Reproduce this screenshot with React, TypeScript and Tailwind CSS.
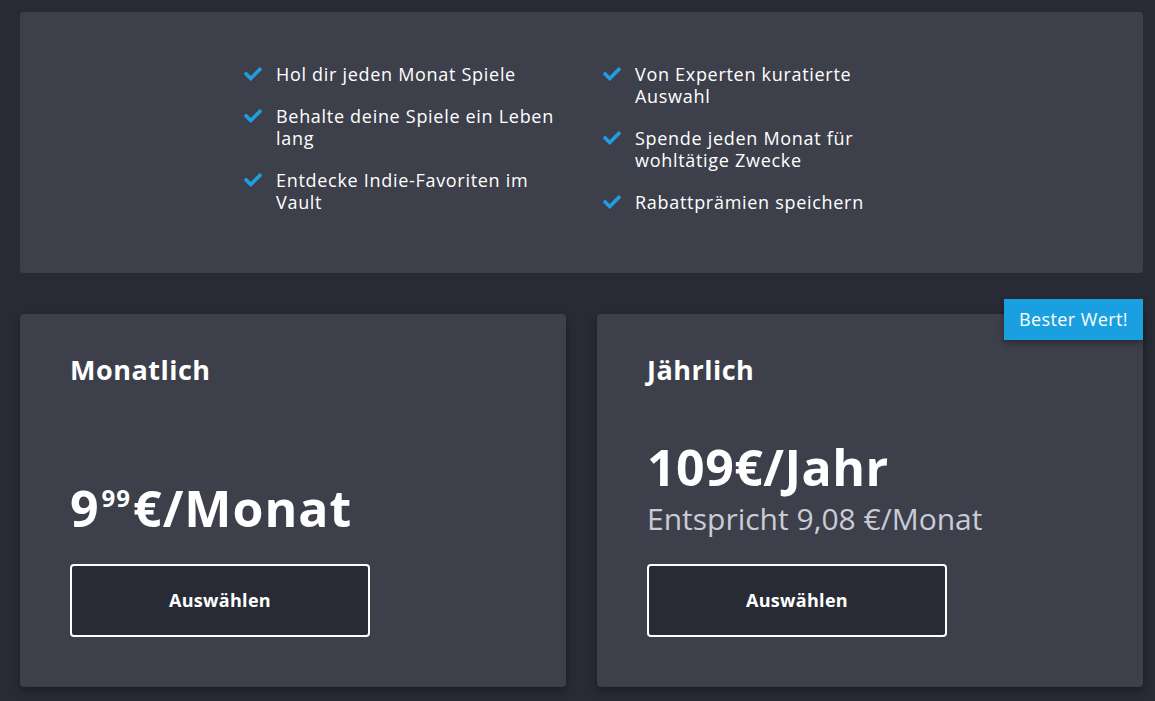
import { FaCheck } from "react-icons/fa";

const leftFeatures = [
  ["Hol dir jeden Monat Spiele"],
  ["Behalte deine Spiele ein Leben", "lang"],
  ["Entdecke Indie-Favoriten im", "Vault"],
];

const rightFeatures = [
  ["Von Experten kuratierte", "Auswahl"],
  ["Spende jeden Monat für", "wohltätige Zwecke"],
  ["Rabattprämien speichern"],
];

function FeatureList({ items }: { items: string[][] }) {
  return (
    <ul className="flex flex-col gap-[20px]">
      {items.map((lines) => (
        <li key={lines[0]} className="flex items-start">
          <FaCheck className="mt-[2px] mr-[14px] shrink-0 text-[#1f9ee2]" size={18} />
          <span className="text-[18px] leading-[22px] font-medium tracking-[0.7px] text-white">
            {lines.map((l) => (
              <span key={l} className="block whitespace-nowrap">
                {l}
              </span>
            ))}
          </span>
        </li>
      ))}
    </ul>
  );
}

function SelectButton() {
  return (
    <button className="w-[300px] h-[73px] rounded-[4px] border-2 border-white bg-[#282b35] text-white text-[18px] tracking-[0.3px] font-bold">
      Auswählen
    </button>
  );
}

export default function App() {
  return (
    <div
      className="w-[1155px] h-[701px] overflow-hidden bg-[#282b35] pl-[20px] pr-[12px] pt-[12px]"
      style={{ fontFamily: "'Open Sans', 'Noto Sans', sans-serif" }}
    >
      <section className="h-[261px] rounded-[4px] bg-[#3d3f4b] pt-[51px] pl-[224px]">
        <div className="flex">
          <div className="w-[359px]">
            <FeatureList items={leftFeatures} />
          </div>
          <div className="w-[340px]">
            <FeatureList items={rightFeatures} />
          </div>
        </div>
      </section>

      <div className="mt-[41px] grid grid-cols-2 gap-[31px]">
        <div className="h-[373px] rounded-[4px] bg-[#3d3f4b] shadow-[0_4px_8px_rgba(0,0,0,0.35)] flex flex-col px-[50px] pt-[40px] pb-[50px]">
          <h2 className="text-[27px] leading-[32px] font-bold tracking-[0.5px] text-white">Monatlich</h2>
          <div className="flex-1" />
          <div className="text-[50px] leading-[56px] font-bold tracking-[1px] text-white">
            9<span className="text-[24px] leading-none align-top relative top-[6px] mx-[2px]">99</span>€/Monat
          </div>
          <div className="mt-[28px]">
            <SelectButton />
          </div>
        </div>

        <div className="relative h-[373px] rounded-[4px] bg-[#3d3f4b] shadow-[0_4px_8px_rgba(0,0,0,0.35)] flex flex-col px-[50px] pt-[40px] pb-[50px]">
          <div className="absolute right-0 top-[-15px] h-[41px] w-[139px] bg-[#1a9fe0] shadow-[0_3px_6px_rgba(0,0,0,0.35)] flex items-center justify-center text-[18px] font-medium tracking-[0.4px] text-white">
            Bester Wert!
          </div>
          <h2 className="text-[27px] leading-[32px] font-bold tracking-[0.5px] text-white">Jährlich</h2>
          <div className="flex-1" />
          <div className="text-[50px] leading-[56px] font-bold tracking-[0.5px] text-white">109€/Jahr</div>
          <div className="mt-[7px] text-[30px] leading-[34px] text-[#c9ccd6]">Entspricht 9,08 €/Monat</div>
          <div className="mt-[28px]">
            <SelectButton />
          </div>
        </div>
      </div>
    </div>
  );
}
